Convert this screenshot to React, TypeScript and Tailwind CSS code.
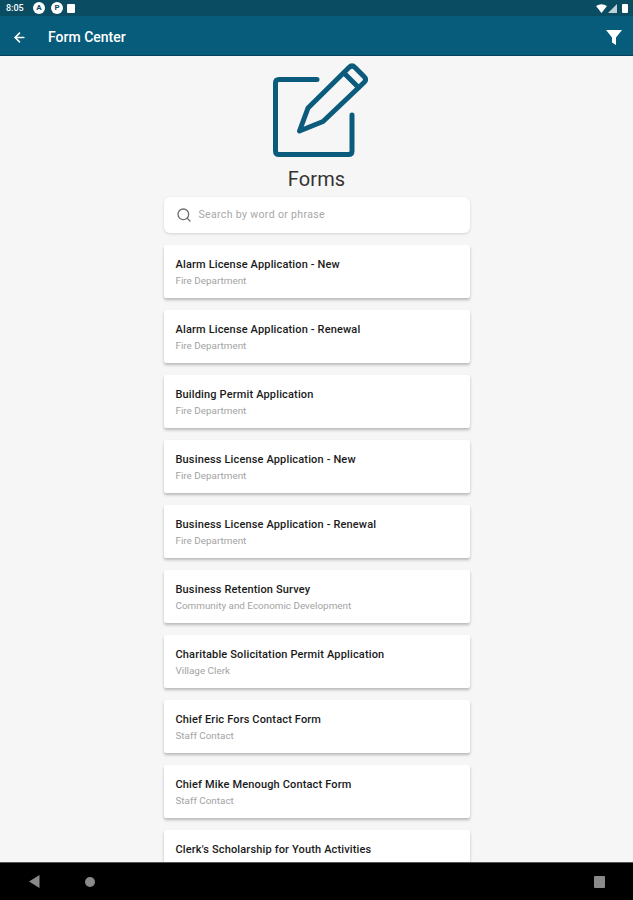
import { ArrowLeft, Search } from 'lucide-react';

const forms: { title: string; dept?: string }[] = [
  { title: 'Alarm License Application - New', dept: 'Fire Department' },
  { title: 'Alarm License Application - Renewal', dept: 'Fire Department' },
  { title: 'Building Permit Application', dept: 'Fire Department' },
  { title: 'Business License Application - New', dept: 'Fire Department' },
  { title: 'Business License Application - Renewal', dept: 'Fire Department' },
  { title: 'Business Retention Survey', dept: 'Community and Economic Development' },
  { title: 'Charitable Solicitation Permit Application', dept: 'Village Clerk' },
  { title: 'Chief Eric Fors Contact Form', dept: 'Staff Contact' },
  { title: 'Chief Mike Menough Contact Form', dept: 'Staff Contact' },
  { title: "Clerk's Scholarship for Youth Activities" },
];

function StatusBar() {
  return (
    <div className="h-4 shrink-0 bg-[#0a4c61] flex items-center justify-between pl-[6px] pr-[5px] text-white">
      <div className="flex items-center">
        <span className="text-[9px] font-medium leading-none w-[27px]">8:05</span>
        <span className="w-[12px] h-[12px] rounded-full bg-white flex items-center justify-center text-[8px] font-bold leading-none text-[#0a4c61]">A</span>
        <span className="ml-[6px] w-[12px] h-[12px] rounded-full bg-white flex items-center justify-center text-[8px] font-bold leading-none text-[#0a4c61]">P</span>
        <span className="ml-[4px] w-[8px] h-[9px] rounded-[1px] bg-white" />
      </div>
      <div className="flex items-center gap-[1px]">
        <svg width="11" height="9" viewBox="0 0 11 9" fill="white"><path d="M0 2 Q5.5 -1.5 11 2 L5.5 9 Z" /></svg>
        <svg width="9" height="9" viewBox="0 0 9 9" fill="white" fillOpacity="0.75"><path d="M9 0 V9 H0 Z" /></svg>
        <span className="w-[6px] h-[9px] rounded-[1px] bg-white ml-[4px]" />
      </div>
    </div>
  );
}

function AppBar() {
  return (
    <div className="h-10 shrink-0 bg-[#075c7b] border-b border-[#06405a] flex items-center pt-[3px] text-white">
      <ArrowLeft className="w-[15px] h-[15px] ml-[12px]" strokeWidth={2.5} />
      <span className="ml-[21px] text-[14px] font-medium">Form Center</span>
      <svg className="ml-auto mr-[10px]" width="18" height="15" viewBox="0 0 17 15" fill="white">
        <path d="M0.5 0 H16.5 L10.5 7.5 V15 L6.5 12.5 V7.5 Z" />
      </svg>
    </div>
  );
}

function FormsIcon() {
  return (
    <svg className="shrink-0 ml-[6px]" width="96" height="96" viewBox="272 62 96 96" fill="none" stroke="#0b5b7c" strokeWidth="5" strokeLinecap="round" strokeLinejoin="round">
      <path d="M317 79.5 H279 Q275.5 79.5 275.5 83 V151 Q275.5 154.5 279 154.5 H348.5 Q352 154.5 352 151 V115" />
      <path d="M308 108 L349 67.5 Q352 64.5 355 67.5 L364 76.5 Q367 79.5 364 82.5 L323 121.5 L299.5 131 Z" />
      <path d="M344 73 L358.5 87.5" />
    </svg>
  );
}

function FormCard({ title, dept }: { title: string; dept?: string }) {
  return (
    <div className="bg-white h-[53px] shrink-0 rounded-[2px] shadow-[0_2px_3px_rgba(0,0,0,0.25)] px-3 pt-[13px]">
      <p className="text-[11px] leading-[14px] font-medium tracking-[0.15px] text-[#1a1a1a]">{title}</p>
      {dept && <p className="mt-[2px] text-[9.9px] leading-[14px] text-[#a3a3a3]">{dept}</p>}
    </div>
  );
}

export default function App() {
  return (
    <div className="w-[633px] h-[900px] flex flex-col overflow-hidden bg-[#f6f6f6] font-['Roboto',sans-serif]">
      <StatusBar />
      <AppBar />
      <main className="flex-1 min-h-0 overflow-hidden flex flex-col items-center pt-[6px]">
        <FormsIcon />
        <h1 className="shrink-0 mt-[8px] text-[20px] leading-[26px] text-[#333333] tracking-[0.1px]">Forms</h1>
        <div className="shrink-0 mt-[5px] w-[306px] flex flex-col gap-3">
          <div className="bg-white h-9 rounded-[6px] shadow-[0_1px_3px_rgba(0,0,0,0.14)] flex items-center px-3 gap-[7px]">
            <Search className="w-[16px] h-[16px] text-[#6e6e6e]" strokeWidth={2} />
            <span className="text-[10.5px] text-[#a8a8a8] tracking-[0.35px]">Search by word or phrase</span>
          </div>
          {forms.map((f) => (
            <FormCard key={f.title} title={f.title} dept={f.dept} />
          ))}
        </div>
      </main>
      <nav className="h-[38px] shrink-0 bg-black border-t border-[#555] flex items-center relative">
        <svg className="ml-[29px]" width="11" height="13" viewBox="0 0 11 13" fill="#8a8a8a"><path d="M10.5 0 V13 L0 6.5 Z" /></svg>
        <span className="ml-[45px] w-[10px] h-[10px] rounded-full bg-[#8a8a8a]" />
        <span className="ml-auto mr-[28px] w-[11px] h-[12px] rounded-[1px] bg-[#8a8a8a]" />
      </nav>
    </div>
  );
}
